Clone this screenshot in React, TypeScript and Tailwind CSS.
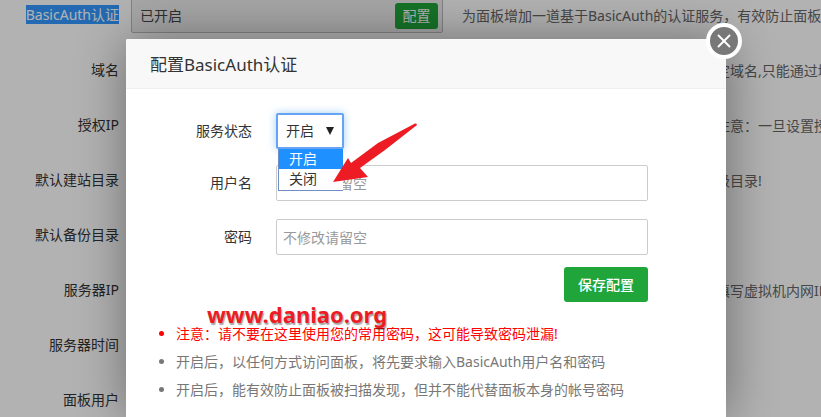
import { X } from "lucide-react";

type Setting = {
  id: string;
  label: string;
  selected?: boolean;
  value?: string;
  hint?: string;
};

const settings: Setting[] = [
  { id: "auth", label: "BasicAuth认证", selected: true, value: "已开启" },
  { id: "domain", label: "域名", hint: "定域名,只能通过域名访问" },
  { id: "ip", label: "授权IP", hint: "注意：一旦设置授权IP" },
  { id: "site", label: "默认建站目录", hint: "级目录!" },
  { id: "backup", label: "默认备份目录" },
  { id: "server", label: "服务器IP", hint: "填写虚拟机内网IP" },
  { id: "time", label: "服务器时间" },
  { id: "user", label: "面板用户" },
];

const fieldClass =
  "h-9 w-[372px] rounded-xs border border-[#ccc] bg-white px-1.5 text-sm text-[#555] outline-none placeholder:text-[#999]";

function SettingRow({ id, label, selected, value, hint }: Setting) {
  return (
    <div className="flex h-9 items-center whitespace-nowrap">
      <div className="w-[119px] shrink-0 text-right text-[#333]">
        <span className={selected ? "bg-[#3399ff] text-white" : ""}>{label}</span>
      </div>
      {value ? (
        <>
          <div className="ml-3 flex h-full w-[312px] shrink-0 items-center justify-between rounded-xs border border-[#bbb] bg-[#eee] pt-0.5 pr-1 pl-2 text-[#444]">
            <span id={id}>{value}</span>
            <button className="h-[26px] w-[43px] rounded-[3px] bg-[#20a53a] text-white" aria-describedby={id}>
              配置
            </button>
          </div>
          <span className="ml-[19px] pt-0.5 text-[#666]">
            为面板增加一道基于BasicAuth的认证服务，有效防止面板被扫描
          </span>
        </>
      ) : (
        <span className="ml-[597px] pt-0.5 text-[#666]">{hint}</span>
      )}
    </div>
  );
}

function StatusSelect() {
  return (
    <div className="relative">
      <select
        id="status"
        defaultValue="on"
        className="block h-9 w-[68px] appearance-none rounded-xs border-2 border-[#66a3f5] bg-white pl-2 text-sm text-[#333] shadow-[0_0_8px_rgba(102,175,233,0.6)] outline-none"
      >
        <option value="on">开启</option>
        <option value="off">关闭</option>
      </select>
      <svg viewBox="0 0 8 8" className="pointer-events-none absolute top-3.5 right-2.5 size-2 fill-[#222]">
        <path d="M0 0h8L4 8z" />
      </svg>
      <ul className="absolute top-9 left-0.5 z-10 w-[65px] border-b border-l border-[#6f8fc4] bg-white pb-px leading-5">
        <li className="bg-[#1e90ff] pl-2.5 text-white">开启</li>
        <li className="pl-2.5 text-[#333]">关闭</li>
      </ul>
      <svg viewBox="0 0 84 60" className="absolute top-2.5 left-[57px] z-20 h-[60px] w-[84px] fill-[#ed1c24]">
        <path d="M0 59 15 35 18 40 45 20 82 0.5Q84 0 84 2L52 27 27 45 35 54z" />
      </svg>
    </div>
  );
}

export default function App() {
  return (
    <div className="relative h-screen overflow-hidden bg-white font-['Noto_Sans','Noto_Sans_CJK_SC',sans-serif] text-sm">
      <main className="-mt-[3px] flex flex-col gap-[19px]">
        {settings.map((s) => (
          <SettingRow key={s.id} {...s} />
        ))}
      </main>

      <div className="absolute inset-0 flex bg-black/30 pt-[39px] pl-[126px]">
        <section
          role="dialog"
          aria-labelledby="dialog-title"
          className="relative w-[600px] rounded-t-xs bg-white shadow-[1px_1px_50px_rgba(0,0,0,0.4)]"
        >
          <h2
            id="dialog-title"
            className="flex h-[50px] items-center rounded-t-xs border-b border-[#eee] bg-[#f8f8f8] px-6 pt-1 text-[17px] text-[#333]"
          >
            配置BasicAuth认证
          </h2>
          <button
            aria-label="关闭"
            className="absolute -top-4 -right-4 flex size-9 items-center justify-center rounded-full border-4 border-white bg-[#787878] text-white"
          >
            <X size={22} strokeWidth={2} />
          </button>

          <form className="pt-6 text-[#333]">
            <div className="mb-4 flex items-center gap-6">
              <label htmlFor="status" className="w-[126px] text-right">服务状态</label>
              <StatusSelect />
            </div>
            <div className="mb-[18px] flex items-center gap-6">
              <label htmlFor="username" className="w-[126px] text-right">用户名</label>
              <input id="username" placeholder="不修改请留空" className={fieldClass} />
            </div>
            <div className="mb-3 flex items-center gap-6">
              <label htmlFor="password" className="w-[126px] text-right">密码</label>
              <input id="password" placeholder="不修改请留空" className={fieldClass} />
            </div>
            <div className="flex justify-end pr-[78px]">
              <button type="button" className="h-[35px] w-[84px] rounded-[3px] bg-[#20a53a] font-medium text-white">
                保存配置
              </button>
            </div>
          </form>

          <div className="relative pt-[18px] pl-[50px] text-[#777]">
            <ul className="list-disc leading-7">
              <li className="text-[#f00]">注意：请不要在这里使用您的常用密码，这可能导致密码泄漏!</li>
              <li>开启后，以任何方式访问面板，将先要求输入BasicAuth用户名和密码</li>
              <li>开启后，能有效防止面板被扫描发现，但并不能代替面板本身的帐号密码</li>
            </ul>
            <strong className="absolute top-0 left-[81px] text-[22px] leading-6 text-[#ed1c24] [text-shadow:1px_2px_1px_rgba(0,0,0,0.35)]">
              www.daniao.org
            </strong>
          </div>
        </section>
      </div>
    </div>
  );
}
